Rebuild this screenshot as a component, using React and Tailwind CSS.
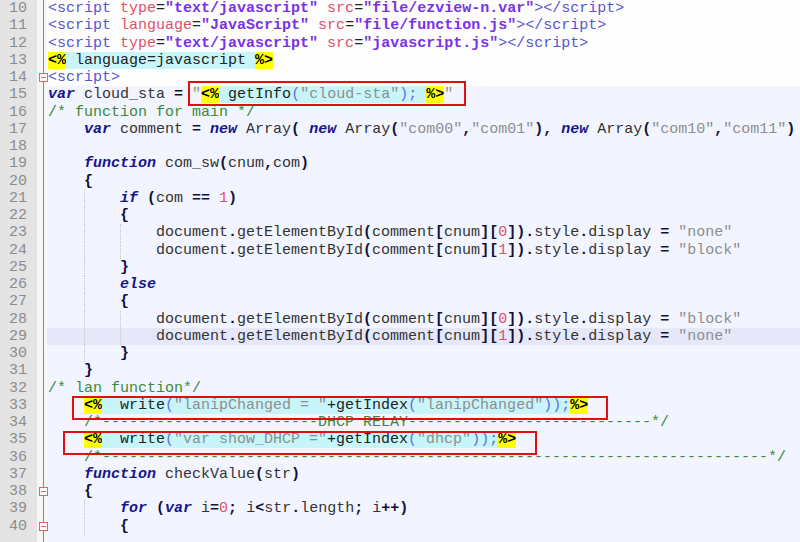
import React from 'react';

// token styles (Notepad++ default theme, slightly muted like the screenshot)
const tag = 'text-[#5656d2]';
const attr = 'text-[#e0506a]';
const hstr = 'text-[#7a32e6] font-bold';
const plain = 'text-[#222]';
const kw = 'text-[#16168a] font-bold italic';
const op = 'text-[#10103a] font-bold';
const id = 'text-[#333]';
const str = 'text-[#8e8e8e]';
const num = 'text-[#e0506a]';
const cm = 'text-[#3a8a3a]';
const aspD = 'bg-[#ffff00] text-black font-bold';
const aspTxt = 'bg-[#c8f5fa] text-[#222]';
const aspOp = 'bg-[#c8f5fa] text-[#6a6ae0]';
const aspStr = 'bg-[#c8f5fa] text-[#8e8e8e]';

const getEl = (idx, val) => [
  ['document', id], ['.', op], ['getElementById', id], ['(', op], ['comment', id],
  ['[', op], ['cnum', id], [']', op], ['[', op], [idx, num], [']', op], [')', op],
  ['.', op], ['style', id], ['.', op], ['display', id], [' ', id], ['=', op], [' ', id],
  [`"${val}"`, str],
];

const lines = [
  { n: 10, bg: 'html', ind: 0, t: [['<script', tag], [' ', plain], ['type', attr], ['=', plain], ['"text/javascript"', hstr], [' ', plain], ['src', attr], ['=', plain], ['"file/ezview-n.var"', hstr], ['></script>', tag]] },
  { n: 11, bg: 'html', ind: 0, t: [['<script', tag], [' ', plain], ['language', attr], ['=', plain], ['"JavaScript"', hstr], [' ', plain], ['src', attr], ['=', plain], ['"file/function.js"', hstr], ['></script>', tag]] },
  { n: 12, bg: 'html', ind: 0, t: [['<script', tag], [' ', plain], ['type', attr], ['=', plain], ['"text/javascript"', hstr], [' ', plain], ['src', attr], ['=', plain], ['"javascript.js"', hstr], ['></script>', tag]] },
  { n: 13, bg: 'html', ind: 0, t: [['<%', aspD], [' language=javascript ', aspTxt], ['%>', aspD]] },
  { n: 14, bg: 'html', ind: 0, fold: true, t: [['<script>', tag]] },
  { n: 15, bg: 'js', ind: 0, t: [['var', kw], [' cloud_sta ', id], ['=', op], [' ', id], ['"', str], ['<%', aspD], [' getInfo', aspTxt], ['(', aspOp], ['"cloud-sta"', aspStr], [');', aspOp], [' ', aspTxt], ['%>', aspD], ['"', str]] },
  { n: 16, bg: 'js', ind: 0, t: [['/* function for main */', cm]] },
  { n: 17, bg: 'js', ind: 1, t: [['var', kw], [' comment ', id], ['=', op], [' ', id], ['new', kw], [' Array', id], ['(', op], [' ', id], ['new', kw], [' Array', id], ['(', op], ['"com00"', str], [',', op], ['"com01"', str], [')', op], [',', op], [' ', id], ['new', kw], [' Array', id], ['(', op], ['"com10"', str], [',', op], ['"com11"', str], [')', op]] },
  { n: 18, bg: 'js', ind: 0, t: [] },
  { n: 19, bg: 'js', ind: 1, t: [['function', kw], [' com_sw', id], ['(', op], ['cnum', id], [',', op], ['com', id], [')', op]] },
  { n: 20, bg: 'js', ind: 1, t: [['{', op]] },
  { n: 21, bg: 'js', ind: 2, t: [['if', kw], [' ', id], ['(', op], ['com ', id], ['==', op], [' ', id], ['1', num], [')', op]] },
  { n: 22, bg: 'js', ind: 2, t: [['{', op]] },
  { n: 23, bg: 'js', ind: 3, t: getEl('0', 'none') },
  { n: 24, bg: 'js', ind: 3, t: getEl('1', 'block') },
  { n: 25, bg: 'js', ind: 2, t: [['}', op]] },
  { n: 26, bg: 'js', ind: 2, t: [['else', kw]] },
  { n: 27, bg: 'js', ind: 2, t: [['{', op]] },
  { n: 28, bg: 'js', ind: 3, t: getEl('0', 'block') },
  { n: 29, bg: 'cur', ind: 3, t: getEl('1', 'none') },
  { n: 30, bg: 'js', ind: 2, t: [['}', op]] },
  { n: 31, bg: 'js', ind: 1, t: [['}', op]] },
  { n: 32, bg: 'js', ind: 0, t: [['/* lan function*/', cm]] },
  { n: 33, bg: 'js', ind: 1, t: [['<%', aspD], ['  write', aspTxt], ['(', aspOp], ['"lanipChanged = "', aspStr], ['+getIndex', aspTxt], ['(', aspOp], ['"lanipChanged"', aspStr], ['));', aspOp], ['%>', aspD]] },
  { n: 34, bg: 'js', ind: 1, t: [['/*------------------------DHCP RELAY---------------------------*/', cm]] },
  { n: 35, bg: 'js', ind: 1, t: [['<%', aspD], ['  write', aspTxt], ['(', aspOp], ['"var show_DHCP ="', aspStr], ['+getIndex', aspTxt], ['(', aspOp], ['"dhcp"', aspStr], ['));', aspOp], ['%>', aspD]] },
  { n: 36, bg: 'js', ind: 1, t: [['/*--------------------------------------------------------------------------*/', cm]] },
  { n: 37, bg: 'js', ind: 1, t: [['function', kw], [' checkValue', id], ['(', op], ['str', id], [')', op]] },
  { n: 38, bg: 'js', ind: 1, fold: true, t: [['{', op]] },
  { n: 39, bg: 'js', ind: 2, t: [['for', kw], [' ', id], ['(', op], ['var', kw], [' i', id], ['=', op], ['0', num], [';', op], [' i', id], ['<', op], ['str', id], ['.', op], ['length', id], [';', op], [' i', id], ['++', op], [')', op]] },
  { n: 40, bg: 'js', ind: 2, fold: true, t: [['{', op]] },
  { n: '', bg: 'js', ind: 0, t: [] },
];

const rowBg = {
  html: 'bg-[#fdfdfd]',
  js: 'bg-[#f2f4ff]',
  cur: 'bg-[#e6e8fa]',
};

const Indent = ({ level }) =>
  Array.from({ length: level }).map((_, k) => (
    <span
      key={k}
      className={`inline-block h-full w-[36px] ${k > 0 ? 'border-l border-dotted border-[#c4c4c4]' : ''}`}
    />
  ));

const Row = ({ line }) => (
  <div className="flex h-[17.25px]">
    {/* line number */}
    <div className="w-[37px] shrink-0 bg-[#e4e4e4] pr-[10px] text-right leading-[17.25px] text-[#8c8c8c]">
      {line.n}
    </div>
    {/* fold margin */}
    <div className="relative w-[10px] shrink-0 bg-[#f6f6f6]">
      <div className="absolute left-[6px] top-0 h-full w-px bg-[#e06666]" />
      {line.fold && (
        <div className="absolute left-[2px] top-[4px] flex h-[9px] w-[9px] items-center justify-center border border-[#e06666] bg-white">
          <div className="h-px w-[5px] bg-[#e06666]" />
        </div>
      )}
    </div>
    {/* code */}
    <div className={`flex flex-1 items-stretch overflow-hidden whitespace-pre pl-px leading-[17.25px] ${rowBg[line.bg]}`}>
      <Indent level={line.ind} />
      <span>
        {line.t.map(([text, cls], i) => (
          <span key={i} className={cls}>{text}</span>
        ))}
      </span>
    </div>
  </div>
);

export default function App() {
  return (
    <div className="relative h-[542px] w-[800px] overflow-hidden bg-[#f2f4ff] font-['Liberation_Mono','Courier_New',monospace] text-[15px]">
      {lines.map((line, i) => (
        <Row key={i} line={line} />
      ))}

      {/* red annotation boxes */}
      <div className="absolute left-[188px] top-[81px] h-[25px] w-[278px] border-2 border-[#e01010]" />
      <div className="absolute left-[72px] top-[396px] h-[24px] w-[536px] border-2 border-[#e01010]" />
      <div className="absolute left-[63px] top-[431px] h-[24px] w-[474px] border-2 border-[#e01010]" />
    </div>
  );
}
